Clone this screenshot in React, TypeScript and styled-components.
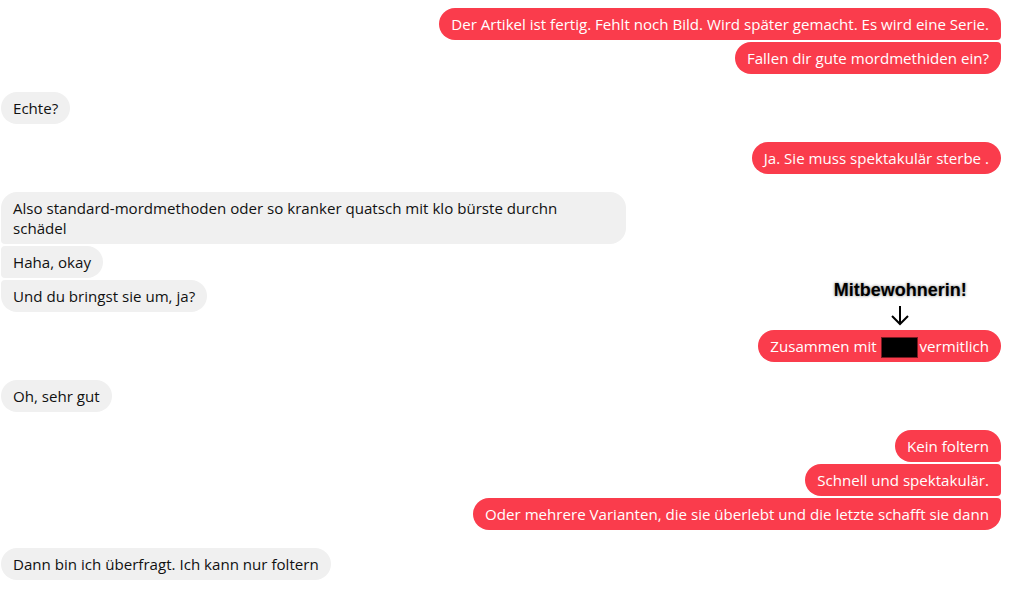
import React from "react";
import styled, { createGlobalStyle, css } from "styled-components";

const Global = createGlobalStyle`
  html, body { margin: 0; padding: 0; background: #ffffff; }
  body { font-family: "Open Sans", "Noto Sans", sans-serif; }
`;

const Thread = styled.div`
  display: flex;
  flex-direction: column;
  gap: 18px;
  padding: 8px 11px 10px 1px;
`;

const Group = styled.div<{ $mine?: boolean }>`
  display: flex;
  flex-direction: column;
  align-items: ${(p) => (p.$mine ? "flex-end" : "flex-start")};
  gap: 2px;
`;

type Pos = "single" | "first" | "middle" | "last";

const Bubble = styled.div<{ $mine?: boolean; $pos: Pos }>`
  position: relative;
  box-sizing: border-box;
  max-width: 625px;
  padding: 6px 12px;
  font-size: 15.1px;
  line-height: 20px;
  border-radius: 16px;
  ${(p) =>
    p.$mine
      ? css`
          background: #fa3c4c;
          color: #ffffff;
          ${p.$pos === "first" && css`border-bottom-right-radius: 4px;`}
          ${p.$pos === "middle" && css`border-top-right-radius: 4px; border-bottom-right-radius: 4px;`}
          ${p.$pos === "last" && css`border-top-right-radius: 4px;`}
        `
      : css`
          background: #f0f0f0;
          color: #111111;
          ${p.$pos === "first" && css`border-bottom-left-radius: 4px;`}
          ${p.$pos === "middle" && css`border-top-left-radius: 4px; border-bottom-left-radius: 4px;`}
          ${p.$pos === "last" && css`border-top-left-radius: 4px;`}
        `}
`;

const Redacted = styled.span`
  display: inline-block;
  width: 35px;
  height: 19px;
  background: #000;
  border: 1px solid #7a1a22;
  vertical-align: -3px;
  margin: -1px 2px -3px 0;
`;

const Annotation = styled.div`
  position: absolute;
  bottom: 100%;
  left: 72px;
  width: 140px;
  display: flex;
  flex-direction: column;
  align-items: center;
  gap: 5px;
  margin-bottom: 4px;
`;

const AnnotationText = styled.span`
  font-family: "Liberation Sans", Arial, sans-serif;
  font-weight: bold;
  font-size: 18px;
  line-height: 19px;
  color: #000;
  text-shadow: 0 0 3px rgba(0, 0, 0, 0.55);
  white-space: nowrap;
`;

const Arrow = () => (
  <svg width="20" height="21" viewBox="0 0 20 21" fill="none">
    <path d="M10 1 V19 M2 11 L10 19 L18 11" stroke="#000" strokeWidth="2" />
  </svg>
);

const App: React.FC = () => (
  <>
    <Global />
    <Thread>
      <Group $mine>
        <Bubble $mine $pos="first">
          Der Artikel ist fertig. Fehlt noch Bild. Wird später gemacht. Es wird eine Serie.
        </Bubble>
        <Bubble $mine $pos="last">Fallen dir gute mordmethiden ein?</Bubble>
      </Group>
      <Group>
        <Bubble $pos="single">Echte?</Bubble>
      </Group>
      <Group $mine>
        <Bubble $mine $pos="single">Ja. Sie muss spektakulär sterbe .</Bubble>
      </Group>
      <Group>
        <Bubble $pos="first">
          Also standard-mordmethoden oder so kranker quatsch mit klo bürste durchn schädel
        </Bubble>
        <Bubble $pos="middle">Haha, okay</Bubble>
        <Bubble $pos="last">Und du bringst sie um, ja?</Bubble>
      </Group>
      <Group $mine>
        <Bubble $mine $pos="single">
          Zusammen mit <Redacted />vermitlich
          <Annotation>
            <AnnotationText>Mitbewohnerin!</AnnotationText>
            <Arrow />
          </Annotation>
        </Bubble>
      </Group>
      <Group>
        <Bubble $pos="single">Oh, sehr gut</Bubble>
      </Group>
      <Group $mine>
        <Bubble $mine $pos="first">Kein foltern</Bubble>
        <Bubble $mine $pos="middle">Schnell und spektakulär.</Bubble>
        <Bubble $mine $pos="last">
          Oder mehrere Varianten, die sie überlebt und die letzte schafft sie dann
        </Bubble>
      </Group>
      <Group>
        <Bubble $pos="single">Dann bin ich überfragt. Ich kann nur foltern</Bubble>
      </Group>
    </Thread>
  </>
);

export default App;
